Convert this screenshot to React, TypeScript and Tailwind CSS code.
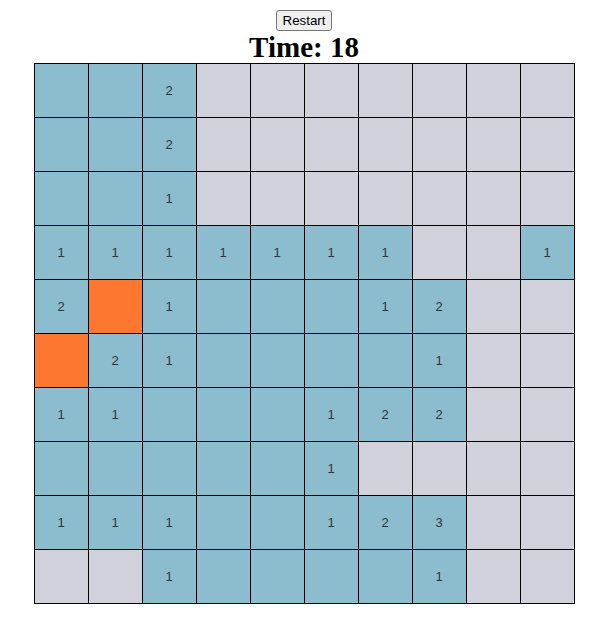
import React from 'react'

// B = revealed, G = hidden, O = flagged/mine
const rows = [
  'B B B2 G G G G G G G',
  'B B B2 G G G G G G G',
  'B B B1 G G G G G G G',
  'B1 B1 B1 B1 B1 B1 B1 G G B1',
  'B2 O B1 B B B B1 B2 G G',
  'O B2 B1 B B B B B1 G G',
  'B1 B1 B B B B1 B2 B2 G G',
  'B B B B B B1 G G G G',
  'B1 B1 B1 B B B1 B2 B3 G G',
  'G G B1 B B B B B1 G G',
]

const cellColor: Record<string, string> = {
  B: 'bg-[#8bbdcf]',
  G: 'bg-[#d1d1db]',
  O: 'bg-[#fe7731]',
}

export default function App() {
  return (
    <div className="flex flex-col items-center pt-[10px]" style={{ fontFamily: '"Liberation Sans", Arial, sans-serif' }}>
      <button className="h-[21px] px-[6px] text-[13.33px] leading-none text-black bg-[#efefef] border border-[#767676] rounded-[3px] hover:bg-[#e5e5e5]">
        Restart
      </button>
      <h1
        className="text-[29px] font-bold leading-[32px] text-black"
        style={{ fontFamily: '"Liberation Serif", "Times New Roman", serif' }}
      >
        Time: 18
      </h1>
      <div className="grid grid-cols-[repeat(10,54px)] border-l border-t border-black">
        {rows.flatMap((row, r) =>
          row.split(' ').map((c, i) => (
            <div
              key={`${r}-${i}`}
              className={`h-[54px] w-[54px] border-r border-b border-black flex items-center justify-center text-[13px] text-[#333] ${cellColor[c[0]]}`}
            >
              {c.slice(1)}
            </div>
          ))
        )}
      </div>
    </div>
  )
}
